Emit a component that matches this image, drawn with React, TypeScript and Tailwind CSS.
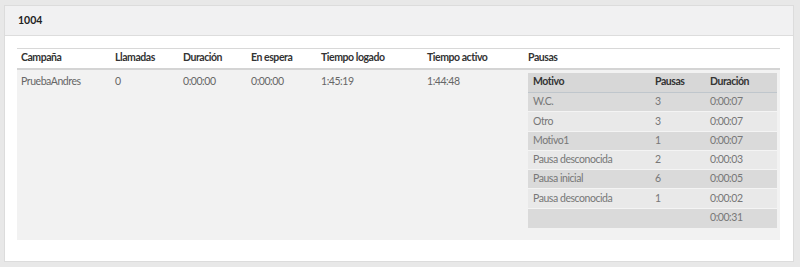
import React from "react";

const pauses = [
  { motivo: "W.C.", n: "3", dur: "0:00:07" },
  { motivo: "Otro", n: "3", dur: "0:00:07" },
  { motivo: "Motivo1", n: "1", dur: "0:00:07" },
  { motivo: "Pausa desconocida", n: "2", dur: "0:00:03" },
  { motivo: "Pausa inicial", n: "6", dur: "0:00:05" },
  { motivo: "Pausa desconocida", n: "1", dur: "0:00:02" },
];

const font = { fontFamily: 'Lato, "Open Sans", sans-serif' };

export default function App() {
  return (
    <div className="w-[800px] h-[267px] bg-[#e8e8e8] pt-[5px] pl-[4px] pr-[6px] pb-[5px]" style={font}>
      <div className="h-[257px] bg-white border border-[#dcdcdc] flex flex-col">
        <div className="h-[30px] bg-[#f1f1f2] border-b border-[#dddddd] flex items-center pl-[13px] text-[10.5px] font-bold text-[#222]">
          1004
        </div>
        <div className="pt-[12px] pl-[12px] pr-[13px]">
          <table className="w-[763px] border-collapse table-fixed text-[10.5px] tracking-[-0.45px]">
            <colgroup>
              <col className="w-[94px]" />
              <col className="w-[68px]" />
              <col className="w-[68px]" />
              <col className="w-[70px]" />
              <col className="w-[106px]" />
              <col className="w-[101px]" />
              <col className="w-[256px]" />
            </colgroup>
            <thead>
              <tr className="h-[20px] border-t border-[#d8d8d8] border-b-2 border-b-[#d4d4d4] bg-white">
                {["Campaña", "Llamadas", "Duración", "En espera", "Tiempo logado", "Tiempo activo", "Pausas"].map((h) => (
                  <th key={h} className="text-left font-bold text-[#333] pl-[4px] py-0 align-middle">
                    {h}
                  </th>
                ))}
              </tr>
            </thead>
            <tbody>
              <tr className="bg-[#f2f2f2] h-[171px] text-[#666]">
                <td className="align-top pl-[4px] pt-[4px]">PruebaAndres</td>
                <td className="align-top pl-[4px] pt-[4px]">0</td>
                <td className="align-top pl-[4px] pt-[4px]">0:00:00</td>
                <td className="align-top pl-[4px] pt-[4px]">0:00:00</td>
                <td className="align-top pl-[4px] pt-[4px]">1:45:19</td>
                <td className="align-top pl-[4px] pt-[4px]">1:44:48</td>
                <td className="align-top pl-[4px] pt-[3px] pb-[12px]">
                  <table className="w-[249px] border-collapse table-fixed">
                    <colgroup>
                      <col className="w-[123px]" />
                      <col className="w-[55px]" />
                      <col className="w-[71px]" />
                    </colgroup>
                    <thead>
                      <tr className="h-[20px] bg-[#d7d7d7] border-b border-[#bfc6cc]">
                        <th className="text-left font-bold text-[#333] pl-[5px]">Motivo</th>
                        <th className="text-left font-bold text-[#333] pl-[4px]">Pausas</th>
                        <th className="text-left font-bold text-[#333] pl-[4px]">Duración</th>
                      </tr>
                    </thead>
                    <tbody>
                      {pauses.map((p, i) => (
                        <tr
                          key={i}
                          className={`h-[19.3px] border-b border-[#f4f4f4] ${i % 2 === 0 ? "bg-[#dadada]" : "bg-[#e9e9e9]"}`}
                        >
                          <td className="pl-[5px] text-[#777]">{p.motivo}</td>
                          <td className="pl-[4px] text-[#777]">{p.n}</td>
                          <td className="pl-[4px] text-[#777]">{p.dur}</td>
                        </tr>
                      ))}
                      <tr className="h-[19.3px] bg-[#dadada]">
                        <td className="pl-[5px]"></td>
                        <td className="pl-[4px]"></td>
                        <td className="pl-[4px] text-[#777]">0:00:31</td>
                      </tr>
                    </tbody>
                  </table>
                </td>
              </tr>
            </tbody>
          </table>
        </div>
      </div>
    </div>
  );
}
